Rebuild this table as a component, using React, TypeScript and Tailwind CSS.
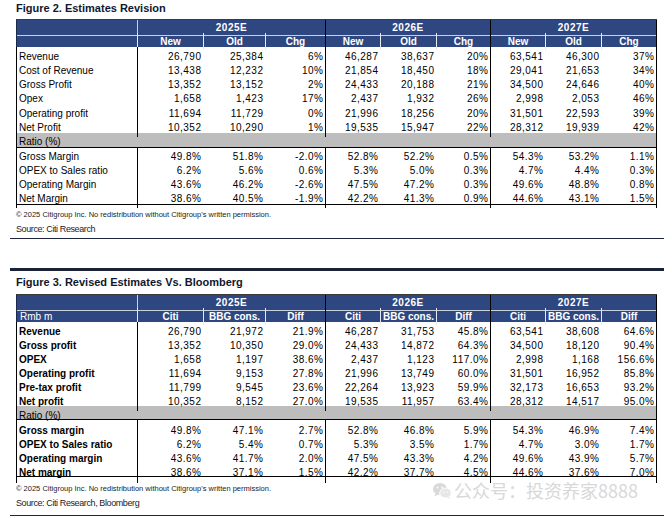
import React from "react";

type Row = { label: string; v: string[] };

const t1Top: Row[] = [
  { label: "Revenue", v: ["26,790", "25,384", "6%", "46,287", "38,637", "20%", "63,541", "46,300", "37%"] },
  { label: "Cost of Revenue", v: ["13,438", "12,232", "10%", "21,854", "18,450", "18%", "29,041", "21,653", "34%"] },
  { label: "Gross Profit", v: ["13,352", "13,152", "2%", "24,433", "20,188", "21%", "34,500", "24,646", "40%"] },
  { label: "Opex", v: ["1,658", "1,423", "17%", "2,437", "1,932", "26%", "2,998", "2,053", "46%"] },
  { label: "Operating profit", v: ["11,694", "11,729", "0%", "21,996", "18,256", "20%", "31,501", "22,593", "39%"] },
  { label: "Net Profit", v: ["10,352", "10,290", "1%", "19,535", "15,947", "22%", "28,312", "19,939", "42%"] },
];
const t1Bot: Row[] = [
  { label: "Gross Margin", v: ["49.8%", "51.8%", "-2.0%", "52.8%", "52.2%", "0.5%", "54.3%", "53.2%", "1.1%"] },
  { label: "OPEX to Sales ratio", v: ["6.2%", "5.6%", "0.6%", "5.3%", "5.0%", "0.3%", "4.7%", "4.4%", "0.3%"] },
  { label: "Operating Margin", v: ["43.6%", "46.2%", "-2.6%", "47.5%", "47.2%", "0.3%", "49.6%", "48.8%", "0.8%"] },
  { label: "Net Margin", v: ["38.6%", "40.5%", "-1.9%", "42.2%", "41.3%", "0.9%", "44.6%", "43.1%", "1.5%"] },
];
const t2Top: Row[] = [
  { label: "Revenue", v: ["26,790", "21,972", "21.9%", "46,287", "31,753", "45.8%", "63,541", "38,608", "64.6%"] },
  { label: "Gross profit", v: ["13,352", "10,350", "29.0%", "24,433", "14,872", "64.3%", "34,500", "18,120", "90.4%"] },
  { label: "OPEX", v: ["1,658", "1,197", "38.6%", "2,437", "1,123", "117.0%", "2,998", "1,168", "156.6%"] },
  { label: "Operating profit", v: ["11,694", "9,153", "27.8%", "21,996", "13,749", "60.0%", "31,501", "16,952", "85.8%"] },
  { label: "Pre-tax profit", v: ["11,799", "9,545", "23.6%", "22,264", "13,923", "59.9%", "32,173", "16,653", "93.2%"] },
  { label: "Net profit", v: ["10,352", "8,152", "27.0%", "19,535", "11,957", "63.4%", "28,312", "14,517", "95.0%"] },
];
const t2Bot: Row[] = [
  { label: "Gross margin", v: ["49.8%", "47.1%", "2.7%", "52.8%", "46.8%", "5.9%", "54.3%", "46.9%", "7.4%"] },
  { label: "OPEX to Sales ratio", v: ["6.2%", "5.4%", "0.7%", "5.3%", "3.5%", "1.7%", "4.7%", "3.0%", "1.7%"] },
  { label: "Operating margin", v: ["43.6%", "41.7%", "2.0%", "47.5%", "43.3%", "4.2%", "49.6%", "43.9%", "5.7%"] },
  { label: "Net margin", v: ["38.6%", "37.1%", "1.5%", "42.2%", "37.7%", "4.5%", "44.6%", "37.6%", "7.0%"] },
];

const GRID = "grid grid-cols-[122px_66px_62px_60px_55px_56px_54px_55px_56px_55px]";

function DataRow({
  row,
  bold,
  h,
  lead,
}: {
  row: Row;
  bold?: boolean;
  h: string;
  lead: string;
}) {
  return (
    <div className={`${GRID} text-[10px] ${lead} ${h}`}>
      <div
        className={`border-l border-r border-black pl-[2px] whitespace-nowrap ${bold ? "font-bold" : ""}`}
      >
        {row.label}
      </div>
      {row.v.map((x, i) => (
        <div
          key={i}
          className={
            i % 3 === 2
              ? "border-r border-black pr-[1.5px] text-right tracking-[0.5px] whitespace-nowrap"
              : "pr-[2.5px] text-right tracking-[0.5px] whitespace-nowrap"
          }
        >
          {x}
        </div>
      ))}
    </div>
  );
}

function Table({
  sub,
  corner,
  top,
  bot,
  bold,
  topH,
  botH,
  ratioCls,
  botLead,
}: {
  sub: string[];
  corner?: string;
  top: Row[];
  bot: Row[];
  bold?: boolean;
  topH: string[];
  botH: string[];
  ratioCls: string;
  botLead: string;
}) {
  const years = ["2025E", "2026E", "2027E"];
  return (
    <div className="ml-[16px] w-[641px]">
      <div
        className={`${GRID} h-[14px] border-t border-[#3a3a3a] bg-[#2e4780] text-white text-[10px] font-bold leading-[15px]`}
      >
        <div className="border-l border-[#1b2a4a] border-r border-r-[#c9d0de] border-b border-b-[#c9d0de]" />
        {years.map((y) => (
          <div
            key={y}
            className="col-span-3 border-r border-black border-b border-b-[#c9d0de] text-center tracking-[0.5px]"
          >
            {y}
          </div>
        ))}
      </div>
      <div className={`${GRID} h-[14px] bg-[#2e4780] text-white text-[10px] leading-[17px]`}>
        <div className="border-l border-[#1b2a4a] border-r border-r-[#e6e9f0] pl-[3px]">{corner}</div>
        {years.map((y) =>
          sub.map((s, j) => (
            <div
              key={y + s}
              className={
                j === 2
                  ? "border-r border-black text-center font-bold"
                  : "border-r border-[#e6e9f0] text-center font-bold"
              }
            >
              {s}
            </div>
          ))
        )}
      </div>
      {top.map((r, i) => (
        <DataRow key={r.label} row={r} bold={bold} h={topH[i]} lead="leading-[19px]" />
      ))}
      <div className={`border-l border-r border-b border-black bg-[#bdbdbd] text-[10px] pl-[2px] ${ratioCls}`}>
        Ratio (%)
      </div>
      {bot.map((r, i) => (
        <DataRow key={r.label} row={r} bold={bold} h={botH[i]} lead={botLead} />
      ))}
    </div>
  );
}

function WeChat() {
  return (
    <svg width="20" height="18" viewBox="0 0 20 18" fill="none">
      <ellipse cx="8" cy="7" rx="7" ry="6" fill="#d0d0d0" />
      <path d="M3.5 11.5 L2.5 14.5 L6 12.5 Z" fill="#d0d0d0" />
      <ellipse cx="13.5" cy="11" rx="5.8" ry="5" fill="#e2e2e2" stroke="#ffffff" strokeWidth="1" />
      <path d="M17 14.5 L18.5 17 L15 15.5 Z" fill="#e2e2e2" />
      <circle cx="5.5" cy="5.5" r="0.9" fill="#fff" />
      <circle cx="10" cy="5.5" r="0.9" fill="#fff" />
      <circle cx="11.8" cy="10.2" r="0.7" fill="#fff" />
      <circle cx="15.2" cy="10.2" r="0.7" fill="#fff" />
    </svg>
  );
}

export default function App() {
  return (
    <div className="relative w-[672px] h-[518px] overflow-hidden bg-white text-black font-['Liberation_Sans',Arial,sans-serif]">
      <div className="h-[19px] pl-[16px] pt-[1px] text-[11px] leading-[15px] font-bold text-[#0f1730]">
        Figure 2. Estimates Revision
      </div>
      <Table
        sub={["New", "Old", "Chg"]}
        top={t1Top}
        bot={t1Bot}
        topH={["h-[14px]", "h-[14px]", "h-[14px]", "h-[15px]", "h-[14px]", "h-[15px]"]}
        botH={["h-[14px]", "h-[14px]", "h-[14px]", "h-[15px] border-b border-black"]}
        ratioCls="h-[15px] leading-[17px]"
        botLead="leading-[18px]"
      />
      <div className="mt-[4px] h-[13px] pl-[16px] text-[7.5px] leading-[12px] text-[#222]">
        © 2025 Citigroup Inc. No redistribution without Citigroup's written permission.
      </div>
      <div className="h-[14px] pl-[16px] text-[9px] leading-[14px] tracking-[-0.4px] text-[#222]">
        Source: Citi Research
      </div>
      <div className="mt-[2px] ml-[10px] w-[654px] h-px bg-[#1c2440]" />
      <div className="mt-[29px] ml-[10px] w-[654px] h-[3px] bg-[#1a2238]" />
      <div className="h-[23px] pl-[16px] pt-[4px] text-[11px] leading-[15px] font-bold text-[#0f1730]">
        Figure 3. Revised Estimates Vs. Bloomberg
      </div>
      <Table
        sub={["Citi", "BBG cons.", "Diff"]}
        corner="Rmb m"
        top={t2Top}
        bot={t2Bot}
        bold
        topH={["h-[14px]", "h-[14px]", "h-[14px]", "h-[14px]", "h-[14px]", "h-[14px]"]}
        botH={["h-[14px]", "h-[14px]", "h-[14px]", "h-[15px] border-b border-black"]}
        ratioCls="h-[14px] leading-[20px]"
        botLead="leading-[21px]"
      />
      <div className="mt-[6px] h-[13px] pl-[16px] text-[7.5px] leading-[12px] text-[#222]">
        © 2025 Citigroup Inc. No redistribution without Citigroup's written permission.
      </div>
      <div className="h-[14px] pl-[16px] text-[9px] leading-[14px] tracking-[-0.4px] text-[#222]">
        Source: Citi Research, Bloomberg
      </div>
      <div className="mt-[5px] ml-[10px] w-[654px] h-px bg-[#1c2440]" />
      <div className="absolute left-[432px] top-[481px] flex items-center gap-[2px] opacity-80">
        <WeChat />
        <span className="text-[18px] leading-[19px] text-[#cfcfcf] font-['Noto_Sans_CJK_SC',sans-serif]">
          公众号：投资养家8888
        </span>
      </div>
    </div>
  );
}
